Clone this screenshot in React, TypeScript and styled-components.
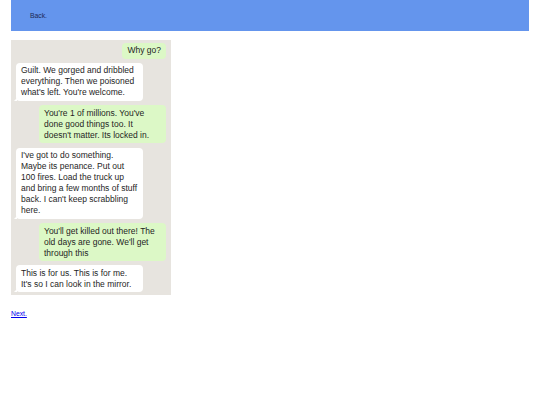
import React from "react";
import styled, { createGlobalStyle } from "styled-components";

const Global = createGlobalStyle`
  html, body { margin: 0; padding: 0; background: #fff; }
  body { font-family: "Liberation Sans", Arial, sans-serif; }
`;

const Page = styled.div`
  padding: 0 11px;
`;

const Header = styled.header`
  height: 31px;
  background: #6495ed;
  display: flex;
  align-items: center;
  padding-left: 19px;
`;

const BackLink = styled.a`
  font-size: 6.8px;
  color: #1c2955;
  text-decoration: none;
`;

const Chat = styled.div`
  margin-top: 9px;
  width: 160px;
  box-sizing: border-box;
  background: #e7e4df;
  padding: 2.5px 5px 3px;
  display: flex;
  flex-direction: column;
  gap: 4.4px;
`;

const Bubble = styled.div<{ $mine?: boolean }>`
  position: relative;
  align-self: ${(p) => (p.$mine ? "flex-end" : "flex-start")};
  max-width: 127px;
  box-sizing: border-box;
  background: ${(p) => (p.$mine ? "#dcf8c6" : "#ffffff")};
  color: #1e1e1e;
  font-size: 8.5px;
  line-height: 11px;
  padding: 2.5px 5px;
  border-radius: 4px;
  ${(p) =>
    p.$mine
      ? ""
      : `&::before {
    content: "";
    position: absolute;
    left: -2px;
    bottom: 0;
    width: 0;
    height: 0;
    border-bottom: 3px solid #ffffff;
    border-left: 3px solid transparent;
  }`}
`;

const NextLink = styled.a`
  display: inline-block;
  margin-top: 15px;
  font-size: 6.8px;
  color: #0000ee;
  text-decoration: underline;
`;

const messages: { mine: boolean; text: string }[] = [
  { mine: true, text: "Why go?" },
  {
    mine: false,
    text: "Guilt. We gorged and dribbled everything. Then we poisoned what's left. You're welcome.",
  },
  {
    mine: true,
    text: "You're 1 of millions. You've done good things too. It doesn't matter. Its locked in.",
  },
  {
    mine: false,
    text: "I've got to do something. Maybe its penance. Put out 100 fires. Load the truck up and bring a few months of stuff back. I can't keep scrabbling here.",
  },
  {
    mine: true,
    text: "You'll get killed out there! The old days are gone. We'll get through this",
  },
  {
    mine: false,
    text: "This is for us. This is for me. It's so I can look in the mirror.",
  },
];

export default function App() {
  return (
    <Page>
      <Global />
      <Header>
        <BackLink href="#">Back.</BackLink>
      </Header>
      <Chat>
        {messages.map((m, i) => (
          <Bubble key={i} $mine={m.mine}>
            {m.text}
          </Bubble>
        ))}
      </Chat>
      <NextLink href="#">Next.</NextLink>
    </Page>
  );
}
